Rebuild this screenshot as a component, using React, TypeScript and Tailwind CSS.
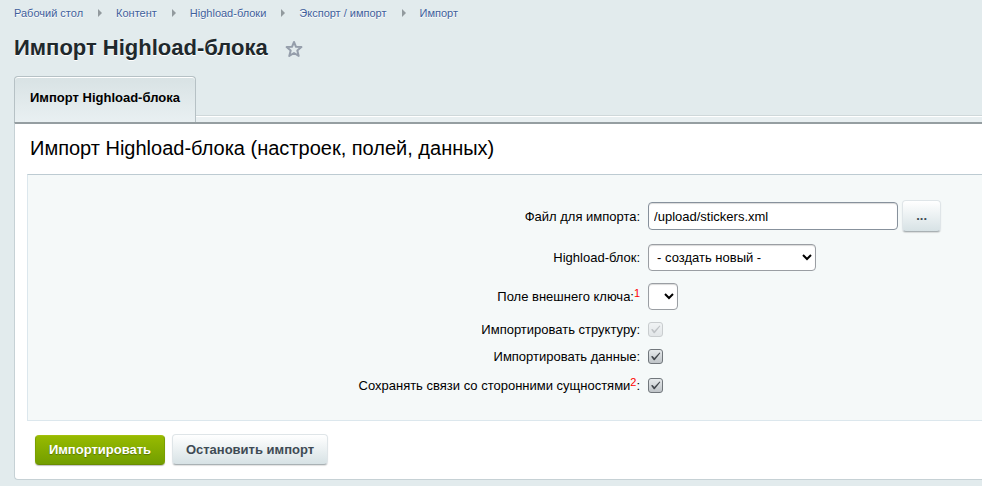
import { Fragment, useState } from "react";
import type { ReactNode } from "react";

const crumbs = [
  "Рабочий стол",
  "Контент",
  "Highload-блоки",
  "Экспорт / импорт",
  "Импорт",
];

const grayButton =
  "rounded border border-[#dfe5e8] border-b-[#a9b1b4] bg-linear-to-b from-white to-[#d7e2e5] font-bold text-[#3f4b54] shadow-[0_1px_1px_rgba(0,0,0,0.12)]";

const selectClass =
  "h-[27px] rounded border border-[#9a9ea3] bg-white text-[13px] text-black shadow-[inset_0_1px_1px_rgba(0,0,0,0.15)]";

function Row({
  id,
  label,
  children,
}: {
  id: string;
  label: ReactNode;
  children: ReactNode;
}) {
  return (
    <div className="grid grid-cols-[11fr_6fr] items-center gap-2">
      <label htmlFor={id} className="text-right leading-[15px]">
        {label}
      </label>
      <div className="flex items-center gap-1">{children}</div>
    </div>
  );
}

function Note({ children }: { children: ReactNode }) {
  return (
    <sup className="-top-1 align-baseline text-[11px] leading-none text-[#ff0000]">
      {children}
    </sup>
  );
}

function Checkbox({
  id,
  checked,
  disabled,
  onChange,
}: {
  id: string;
  checked: boolean;
  disabled?: boolean;
  onChange?: (value: boolean) => void;
}) {
  return (
    <span className="relative block size-[15px]">
      <input
        id={id}
        type="checkbox"
        checked={checked}
        disabled={disabled}
        onChange={(e) => onChange?.(e.target.checked)}
        className="block size-[15px] appearance-none rounded-[3px] border border-[#71777c] bg-linear-to-b from-[#e6eaec] to-[#bfc4c8] disabled:border-[#c9cdcf] disabled:from-[#f0f3f4] disabled:to-[#e2e6e8]"
      />
      {checked && (
        <svg
          viewBox="0 0 15 15"
          className={
            disabled
              ? "pointer-events-none absolute inset-0 text-[#bfc3c6]"
              : "pointer-events-none absolute inset-0 text-[#43484d]"
          }
        >
          <path
            d="M3 7.6 L4.6 7 L6.3 8.9 L11.6 3.4 L12.4 4 L6.7 11.2 L5.8 11.2 Z"
            fill="currentColor"
          />
        </svg>
      )}
    </span>
  );
}

export default function App() {
  const [file, setFile] = useState("/upload/stickers.xml");
  const [importData, setImportData] = useState(true);
  const [saveReference, setSaveReference] = useState(true);

  return (
    <div className="min-h-screen bg-[#e2ebed] pb-1.5 pl-3.5 font-['Liberation_Sans',Arial,sans-serif] text-[13px] text-black">
      <nav className="flex h-[26px] items-center text-[11px] text-[#3f609c] [text-shadow:0_1px_0_#fff]">
        {crumbs.map((crumb, i) => (
          <Fragment key={crumb}>
            {i > 0 && (
              <svg
                width="4"
                height="8"
                viewBox="0 0 4 8"
                className="mr-[14px] ml-[15px]"
              >
                <path d="M0 0 L4 4 L0 8 Z" fill="#929a9e" />
              </svg>
            )}
            <a href="#">{crumb}</a>
          </Fragment>
        ))}
      </nav>

      <div className="flex h-[50px] items-start gap-[17px] pt-2">
        <h1 className="text-[22px] leading-7 font-bold text-[#20282c] [text-shadow:0_1px_0_#fff]">
          Импорт Highload-блока
        </h1>
        <button type="button" aria-label="Добавить в избранное" className="mt-[6px]">
          <svg width="18" height="18" viewBox="0 0 18 18" className="block">
            <path
              d="M9 2 L11 6.8 L16.4 7.1 L12.3 10.5 L13.7 15.9 L9 13 L4.3 15.9 L5.7 10.5 L1.6 7.1 L7 6.8 Z"
              fill="none"
              stroke="#959eab"
              strokeWidth="2"
              strokeLinejoin="round"
            />
          </svg>
        </button>
      </div>

      <div className="flex items-end">
        <button
          type="button"
          className="h-[46px] rounded-t border border-b-0 border-[#b6c1c5] bg-linear-to-b from-[#d8e2e4] to-[#e9f0f2] px-[15px] pb-1 font-bold shadow-[inset_0_1px_0_#fff]"
        >
          Импорт Highload-блока
        </button>
        <div className="h-[7px] flex-1 border-t border-[#cfd8da] bg-[#e8eff1] shadow-[inset_0_1px_0_#fff]" />
      </div>

      <main className="rounded-bl border-t-2 border-b border-l border-t-[#959ea1] border-b-[#c6d1d5] border-l-[#c6d1d5] bg-white">
        <h2 className="px-[15px] pt-3 pb-3.5 text-[20px] leading-6">
          Импорт Highload-блока (настроек, полей, данных)
        </h2>

        <form onSubmit={(e) => e.preventDefault()}>
          <div className="ml-3 border border-r-0 border-[#dce7ed] border-t-[#bdcbd2] bg-[#f5f9f9] pt-[25px] pb-[27px]">
            <div className="flex flex-col gap-3">
              <Row id="file" label="Файл для импорта:">
                <input
                  id="file"
                  type="text"
                  value={file}
                  onChange={(e) => setFile(e.target.value)}
                  className="h-7 w-[250px] rounded border border-[#87919c] bg-white px-[5px] shadow-[inset_0_1px_1px_rgba(0,0,0,0.15)]"
                />
                <button type="button" className={`${grayButton} h-8 w-[39px]`}>
                  ...
                </button>
              </Row>
              <Row id="block" label="Highload-блок:">
                <select id="block" className={`${selectClass} w-[168px] px-1`}>
                  <option>- создать новый -</option>
                </select>
              </Row>
              <Row
                id="xml-field"
                label={
                  <>
                    Поле внешнего ключа:<Note>1</Note>
                  </>
                }
              >
                <select id="xml-field" className={`${selectClass} w-[30px] px-1`} />
              </Row>
              <Row id="structure" label="Импортировать структуру:">
                <Checkbox id="structure" checked disabled />
              </Row>
              <Row id="data" label="Импортировать данные:">
                <Checkbox id="data" checked={importData} onChange={setImportData} />
              </Row>
            </div>
            <div className="pt-3.5">
              <Row
                id="reference"
                label={
                  <>
                    Сохранять связи со сторонними сущностями<Note>2</Note>:
                  </>
                }
              >
                <Checkbox
                  id="reference"
                  checked={saveReference}
                  onChange={setSaveReference}
                />
              </Row>
            </div>
          </div>

          <div className="flex items-center gap-[7px] px-5 pt-[13px] pb-3.5">
            <button
              type="submit"
              className="h-[30px] w-[130px] rounded border border-[#7a9f00] border-t-[#a3bf0a] border-b-[#6a8c00] bg-linear-to-b from-[#97ba00] to-[#729e00] font-bold text-white shadow-[0_1px_1px_rgba(0,0,0,0.25)] [text-shadow:0_1px_1px_rgba(0,0,0,0.3)]"
            >
              Импортировать
            </button>
            <button type="button" className={`${grayButton} h-[31px] w-[156px]`}>
              Остановить импорт
            </button>
          </div>
        </form>
      </main>
    </div>
  );
}
